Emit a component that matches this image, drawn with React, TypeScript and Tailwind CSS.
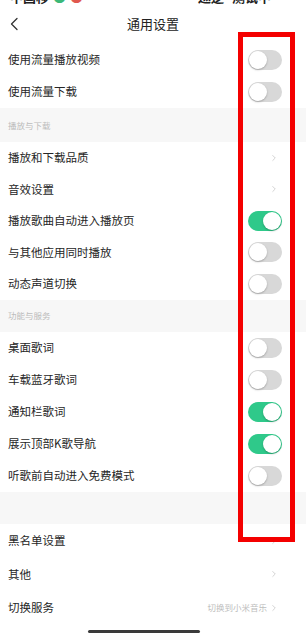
import { ChevronRight } from 'lucide-react';

type Row =
  | { kind: 'toggle'; label: string; on: boolean }
  | { kind: 'link'; label: string; value?: string };

function Toggle({ on }: { on: boolean }) {
  return (
    <div
      className={`relative h-[20px] w-[34px] rounded-full ${
        on ? 'bg-[#2fc98a]' : 'bg-[#d8d8d8]'
      }`}
    >
      <div
        className={`absolute top-[1px] h-[18px] w-[18px] rounded-full bg-white shadow-[0_1px_2px_rgba(0,0,0,0.25)] ${
          on ? 'left-[15px]' : 'left-[1px]'
        }`}
      />
    </div>
  );
}

function SettingRow({ row, height }: { row: Row; height: string }) {
  return (
    <div className={`flex items-center justify-between bg-white pl-2 ${height}`}>
      <span className="text-[11.5px] text-[#262626]">{row.label}</span>
      {row.kind === 'toggle' ? (
        <div className="pr-[24px]">
          <Toggle on={row.on} />
        </div>
      ) : (
        <div className="flex items-center gap-[2px] pr-[27px]">
          {row.value && <span className="text-[8.5px] text-[#bdbdbd]">{row.value}</span>}
          <ChevronRight className="h-[10px] w-[10px] text-[#c4c4c4]" strokeWidth={1.8} />
        </div>
      )}
    </div>
  );
}

function SectionHeader({ title, height }: { title?: string; height: string }) {
  return (
    <div className={`flex items-center bg-[#f7f7f7] pl-2 ${height}`}>
      {title && <span className="text-[8.5px] text-[#bcbcbc]">{title}</span>}
    </div>
  );
}

const group1: Row[] = [
  { kind: 'toggle', label: '使用流量播放视频', on: false },
  { kind: 'toggle', label: '使用流量下载', on: false },
];

const group2: Row[] = [
  { kind: 'link', label: '播放和下载品质' },
  { kind: 'link', label: '音效设置' },
  { kind: 'toggle', label: '播放歌曲自动进入播放页', on: true },
  { kind: 'toggle', label: '与其他应用同时播放', on: false },
  { kind: 'toggle', label: '动态声道切换', on: false },
];

const group3: Row[] = [
  { kind: 'toggle', label: '桌面歌词', on: false },
  { kind: 'toggle', label: '车载蓝牙歌词', on: false },
  { kind: 'toggle', label: '通知栏歌词', on: true },
  { kind: 'toggle', label: '展示顶部K歌导航', on: true },
  { kind: 'toggle', label: '听歌前自动进入免费模式', on: false },
];

const group4: Row[] = [
  { kind: 'link', label: '黑名单设置' },
  { kind: 'link', label: '其他' },
  { kind: 'link', label: '切换服务', value: '切换到小米音乐' },
];

export default function App() {
  return (
    <div
      className="relative h-[644px] w-[306px] overflow-hidden bg-white"
      style={{ fontFamily: '"Noto Sans CJK SC", "Noto Sans", sans-serif' }}
    >
      {/* status bar, cut off by the top edge of the screenshot */}
      <div className="h-[8px] overflow-hidden">
        <div className="-mt-[11px] flex h-[16px] items-center justify-between px-[10px] text-[13px] font-bold leading-[14px] text-[#222]">
          <div className="flex items-center gap-1">
            <span>中国移</span>
            <span className="text-[#3cb878]">●</span>
            <span className="text-[#e0584f]">●</span>
          </div>
          <div className="flex items-center gap-2 pr-[25px]">
            <span>巡逻</span>
            <span>测试中</span>
          </div>
        </div>
      </div>

      {/* header */}
      <div className="relative flex h-[32px] items-center justify-center">
        <svg className="absolute left-[9px] top-[9px]" width="10" height="14" viewBox="0 0 10 14" fill="none">
          <path d="M8 1.5L2.5 7L8 12.5" stroke="#333" strokeWidth="1.3" strokeLinecap="round" strokeLinejoin="round" />
        </svg>
        <span className="text-[13px] text-[#222]">通用设置</span>
      </div>

      <div className="pt-[4px]">
        {group1.map((r) => (
          <SettingRow key={r.label} row={r} height="h-[32px]" />
        ))}
        <SectionHeader title="播放与下载" height="h-[34px]" />
        {group2.map((r) => (
          <SettingRow key={r.label} row={r} height="h-[31.5px]" />
        ))}
        <SectionHeader title="功能与服务" height="h-[32.5px]" />
        {group3.map((r) => (
          <SettingRow key={r.label} row={r} height="h-[32px]" />
        ))}
        <SectionHeader height="h-[32px]" />
        {group4.map((r) => (
          <SettingRow key={r.label} row={r} height="h-[33.5px]" />
        ))}
      </div>

      {/* home indicator */}
      <div className="absolute bottom-[11px] left-[88px] h-[3px] w-[112px] rounded-full bg-[#3a3a3a]" />

      {/* red highlight box */}
      <div className="absolute left-[238px] top-[32px] h-[510px] w-[57px] border-[5px] border-[#f40000]" />
    </div>
  );
}
